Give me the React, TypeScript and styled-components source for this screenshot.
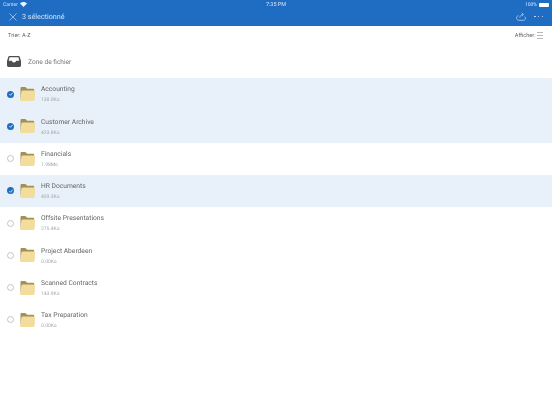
import React from "react";
import styled, { createGlobalStyle } from "styled-components";

const Global = createGlobalStyle`
  html, body { margin: 0; padding: 0; background: #fff; }
  body {
    font-family: "Roboto", "Liberation Sans", sans-serif;
    text-rendering: geometricPrecision;
    -webkit-font-smoothing: antialiased;
  }
`;

type Item = { name: string; size: string; selected: boolean };

const items: Item[] = [
  { name: "Accounting", size: "138.0Ko", selected: true },
  { name: "Customer Archive", size: "423.8Ko", selected: true },
  { name: "Financials", size: "1.98Mo", selected: false },
  { name: "HR Documents", size: "459.3Ko", selected: true },
  { name: "Offsite Presentations", size: "275.4Ko", selected: false },
  { name: "Project Aberdeen", size: "0.00Ko", selected: false },
  { name: "Scanned Contracts", size: "143.9Ko", selected: false },
  { name: "Tax Preparation", size: "0.00Ko", selected: false },
];

const Folder = () => (
  <svg width="15" height="14" viewBox="0 0 15 14">
    <path d="M.5 1.200C.5.500 1 0 1.700 0h3.200c.5 0 .9.200 1.200.6L7 1.800h6c.7 0 1.200.5 1.200 1.200v8.500H.5z" fill="#a58f55" />
    <path d="M1.500 4.300c.1-.5.500-.8 1-.8H15l-.5 9.300c0 .7-.5 1.200-1.200 1.200H0z" fill="#f2dd9c" />
  </svg>
);

export default function App() {
  return (
    <Page>
      <Global />
      <Header>
        <StatusBar>
          <StatusSide>
            Carrier
            <svg width="7" height="5" viewBox="0 0 14 10">
              <path d="M7 10 0 3c4-4 10-4 14 0z" fill="#eaf2fb" />
            </svg>
          </StatusSide>
          <Clock>7:35 PM</Clock>
          <StatusRight>
            100%
            <Battery />
          </StatusRight>
        </StatusBar>
        <NavBar>
          <NavLeft>
            <svg width="8" height="8" viewBox="0 0 8 8">
              <path d="M.5.500l7 7M7.500.500l-7 7" stroke="#c9dcf2" strokeWidth=".7" fill="none" />
            </svg>
            <NavTitle>3 sélectionné</NavTitle>
          </NavLeft>
          <NavRight>
            <svg width="10" height="9" viewBox="0 0 10 9">
              <path d="M2.500 3.700C1.300 3.800.5 4.700.5 5.900c0 1.300 1 2.400 2.300 2.400h4.700c1.100 0 2-.9 2-2 0-.7-.3-1.300-.8-1.700M3.800 5.600c.2-1.700 1.400-2.900 3-3.100M5.800.9l1.700 1.500-1.500 1.700" stroke="#c9dcf2" strokeWidth=".7" fill="none" />
            </svg>
            <Dots>
              <Dot />
              <Dot />
              <Dot />
            </Dots>
          </NavRight>
        </NavBar>
      </Header>
      <SortBar>
        <span>Trier: A-Z</span>
        <ViewToggle>
          Afficher:
          <svg width="6" height="7" viewBox="0 0 6 7">
            <path d="M0 .5h6M0 3.500h6M0 6.500h6" stroke="#8a8a8a" strokeWidth=".6" />
          </svg>
        </ViewToggle>
      </SortBar>
      <DropZone>
        <svg width="14" height="11" viewBox="0 0 14 11">
          <path d="M2.400 0h9.200c.5 0 .9.300 1.100.8L14 5v4.600c0 .8-.6 1.400-1.400 1.400H1.400C.6 11 0 10.400 0 9.600V5L1.300.8C1.500.3 1.900 0 2.400 0z" fill="#4f4f4f" />
          <path d="M2.600 1.300h8.800l.9 3.500H9.200c-.3 1-1.100 1.600-2.200 1.600S5.100 5.800 4.800 4.800H1.700z" fill="#fff" />
        </svg>
        <DropLabel>Zone de fichier</DropLabel>
      </DropZone>
      <List>
        {items.map((item) => (
          <Row key={item.name} $selected={item.selected}>
            <Check $selected={item.selected}>
              {item.selected && (
                <svg width="6" height="6" viewBox="0 0 6 6">
                  <path d="M1.300 3.100 2.500 4.300 4.700 1.700" stroke="#fff" strokeWidth=".8" fill="none" />
                </svg>
              )}
            </Check>
            <Folder />
            <RowText>
              <RowName>{item.name}</RowName>
              <RowSize>{item.size}</RowSize>
            </RowText>
          </Row>
        ))}
      </List>
    </Page>
  );
}

const Page = styled.div`
  width: 552px;
  height: 414px;
  overflow: hidden;
  background: #fff;
`;

const Header = styled.header`
  background: #1e6dc3;
  color: #d5e4f5;
  height: 26px;
  will-change: transform;
`;

const StatusBar = styled.div`
  display: grid;
  grid-template-columns: 1fr auto 1fr;
  align-items: center;
  height: 9px;
  padding: 0 3px;
  font-size: 5px;
`;

const StatusSide = styled.div`
  display: flex;
  align-items: center;
  gap: 2px;
`;

const StatusRight = styled(StatusSide)`
  justify-content: flex-end;
`;

const Clock = styled.div`
  font-size: 5.5px;
`;

const Battery = styled.div`
  width: 10px;
  height: 4px;
  background: #fff;
  border-radius: 1px;
`;

const NavBar = styled.div`
  display: flex;
  align-items: center;
  justify-content: space-between;
  height: 15px;
  padding: 0 9px;
`;

const NavLeft = styled.div`
  display: flex;
  align-items: center;
  gap: 5px;
`;

const NavTitle = styled.span`
  font-size: 7.2px;
`;

const NavRight = styled.div`
  display: flex;
  align-items: center;
  gap: 8px;
`;

const Dots = styled.div`
  display: flex;
  gap: 2.2px;
`;

const Dot = styled.span`
  width: 1.5px;
  height: 1.5px;
  border-radius: 50%;
  background: #dbe8f7;
`;

const SortBar = styled.div`
  display: flex;
  align-items: center;
  justify-content: space-between;
  height: 19px;
  padding: 0 9px 0 8px;
  font-size: 5.6px;
  color: #666;
  will-change: transform;
`;

const ViewToggle = styled.div`
  display: flex;
  align-items: center;
  gap: 1.500px;
`;

const DropZone = styled.div`
  display: flex;
  align-items: center;
  gap: 7px;
  height: 33px;
  padding: 0 7px;
  will-change: transform;
`;

const DropLabel = styled.span`
  font-size: 6.6px;
  color: #777;
`;

const List = styled.div`
  display: flex;
  flex-direction: column;
`;

const Row = styled.div<{ $selected: boolean }>`
  display: flex;
  flex: none;
  align-items: center;
  height: 32.25px;
  box-sizing: border-box;
  padding-left: 7px;
  gap: 6px;
  background: ${(p) => (p.$selected ? "#e8f0f9" : "#fff")};
`;

const Check = styled.span<{ $selected: boolean }>`
  width: 7px;
  height: 7px;
  box-sizing: border-box;
  border-radius: 50%;
  display: flex;
  align-items: center;
  justify-content: center;
  background: ${(p) => (p.$selected ? "#1e6dc3" : "#fff")};
  border: ${(p) => (p.$selected ? "none" : "0.7px solid #c4c4c4")};
`;

const RowText = styled.div`
  display: flex;
  flex-direction: column;
  gap: 3.500px;
  will-change: transform;
`;

const RowName = styled.span`
  font-size: 6.7px;
  color: #666;
`;

const RowSize = styled.span`
  font-size: 5px;
  color: #a6a6a6;
`;
